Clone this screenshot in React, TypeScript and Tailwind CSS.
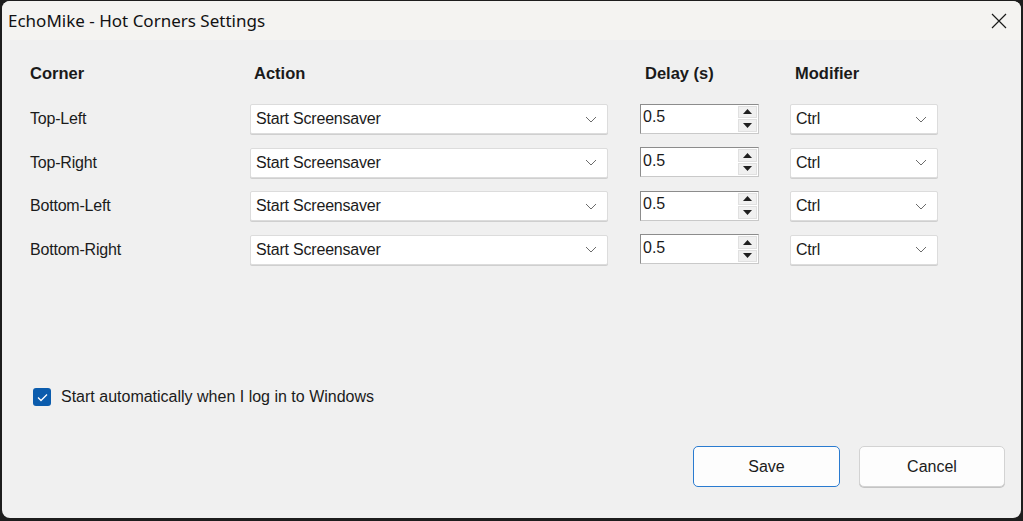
import React from "react";

const rows = ["Top-Left", "Top-Right", "Bottom-Left", "Bottom-Right"];

function Chevron() {
  return (
    <svg width="12" height="7" viewBox="0 0 12 7" className="shrink-0">
      <path d="M1 1 L6 6 L11 1" fill="none" stroke="#6b6b6b" strokeWidth="1" />
    </svg>
  );
}

function Combo({ value, width }: { value: string; width: string }) {
  return (
    <div
      className={`${width} h-[30px] flex items-center justify-between bg-white border border-[#dcdcdc] rounded-[2px] shadow-[0_1px_0_#cfcfcf] pl-[5px] pr-[10px]`}
    >
      <span className="text-[16px] text-[#1b1b1b] tracking-[-0.2px]">{value}</span>
      <Chevron />
    </div>
  );
}

function Spinner() {
  return (
    <div className="w-[119px] h-[30px] flex bg-white border border-[#8c8c8c] border-r-[#c9c9c9] border-b-[#c9c9c9] -mt-[1px]">
      <div className="flex-1 pl-[2px] pb-[3px] flex items-center text-[16px] text-[#1b1b1b]">0.5</div>
      <div className="w-[20px] flex flex-col gap-[1px] py-[1px] pr-[1px]">
        <div className="flex-1 bg-[#f0f0f0] border border-[#e0e0e0] flex items-center justify-center">
          <svg width="9" height="5" viewBox="0 0 9 5">
            <path d="M0 5 L4.5 0 L9 5 Z" fill="#1f1f1f" />
          </svg>
        </div>
        <div className="flex-1 bg-[#f0f0f0] border border-[#e0e0e0] flex items-center justify-center">
          <svg width="9" height="5" viewBox="0 0 9 5">
            <path d="M0 0 L9 0 L4.5 5 Z" fill="#1f1f1f" />
          </svg>
        </div>
      </div>
    </div>
  );
}

export default function App() {
  return (
    <div
      className="w-[1023px] h-[521px] bg-[#1d1d1d] pl-[2px] pr-[2px] pt-[1px] pb-[3px]"
      style={{ fontFamily: '"Liberation Sans", Arial, sans-serif' }}
    >
      <div className="h-full flex flex-col rounded-[8px] overflow-hidden bg-[#f0f0f0]">
        {/* title bar */}
        <div className="h-[39px] shrink-0 bg-[#f4f3f1] flex items-center justify-between pl-[6px] pr-[14px]">
          <span
            className="text-[17px] text-[#111]"
            style={{ fontFamily: '"Noto Sans", "Open Sans", sans-serif' }}
          >
            EchoMike - Hot Corners Settings
          </span>
          <svg width="16" height="16" viewBox="0 0 16 16">
            <path d="M1 1 L15 15 M15 1 L1 15" stroke="#1a1a1a" strokeWidth="1.2" />
          </svg>
        </div>

        {/* form body */}
        <div className="flex-1 flex flex-col pl-[28px] pt-[21px] pb-[31px]">
          <div className="grid grid-cols-[220px_390px_150px_149px] h-[22px] items-center text-[16.5px] font-bold text-[#1a1a1a]">
            <span>Corner</span>
            <span className="pl-[4px]">Action</span>
            <span className="pl-[5px]">Delay (s)</span>
            <span className="pl-[5px]">Modifier</span>
          </div>

          <div className="mt-[21px] flex flex-col gap-[13.5px]">
            {rows.map((r) => (
              <div key={r} className="grid grid-cols-[220px_390px_150px_149px] items-center h-[30px]">
                <span className="text-[16px] text-[#1b1b1b] tracking-[-0.2px]">{r}</span>
                <Combo value="Start Screensaver" width="w-[358px]" />
                <Spinner />
                <Combo value="Ctrl" width="w-[148px]" />
              </div>
            ))}
          </div>

          <div className="flex-1" />

          <label className="flex items-center gap-[10px] pl-[3px]">
            <span className="w-[18px] h-[18px] rounded-[3px] bg-[#0b5cad] flex items-center justify-center">
              <svg width="11" height="9" viewBox="0 0 11 9">
                <path d="M1 4.5 L4 7.5 L10 1.5" fill="none" stroke="#ffffff" strokeWidth="1.3" />
              </svg>
            </span>
            <span className="text-[16px] text-[#1b1b1b]">
              Start automatically when I log in to Windows
            </span>
          </label>

          <div className="mt-[37px] flex justify-end gap-[19px] pr-[16px]">
            <button className="w-[147px] h-[41px] rounded-[5px] bg-[#fdfdfd] border-[1.5px] border-[#2a7bd0] text-[16px] text-[#1b1b1b]">
              Save
            </button>
            <button className="w-[146px] h-[41px] rounded-[5px] bg-[#fdfdfd] border border-[#d3d3d3] shadow-[0_1px_0_#c4c4c4] text-[16px] text-[#1b1b1b]">
              Cancel
            </button>
          </div>
        </div>
      </div>
    </div>
  );
}
